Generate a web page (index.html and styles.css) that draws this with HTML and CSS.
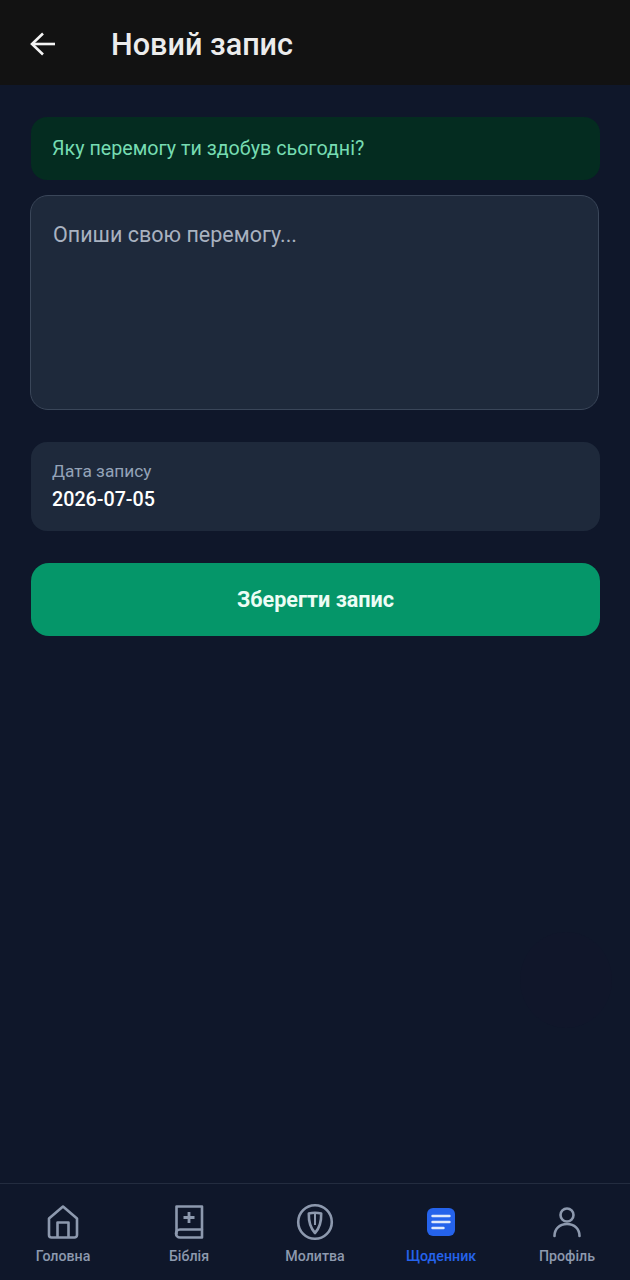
FILE: index.html
```html
<!DOCTYPE html>
<html lang="uk">
<head>
    <meta charset="UTF-8">
    <meta name="viewport" content="width=device-width, initial-scale=1.0">
    <title>Новий запис</title>
    <link rel="stylesheet" href="styles.css">
</head>
<body>

<div class="app">
    <header class="topbar">
        <button class="back-button" aria-label="Назад">
            <svg width="28" height="28" viewBox="0 0 28 28" fill="none" stroke="#f3f3f3" stroke-width="2.6">
                <path d="M3 14H26"/>
                <path d="M14 3.5L3 14L14 24.5"/>
            </svg>
        </button>
        <h1 class="topbar-title">Новий запис</h1>
    </header>

    <main class="content">
        <div class="prompt">Яку перемогу ти здобув сьогодні?</div>
        <textarea class="entry-input" placeholder="Опиши свою перемогу..."></textarea>
        <div class="date-field">
            <span class="date-label">Дата запису</span>
            <span class="date-value">2026-07-05</span>
        </div>
        <button class="save-button">Зберегти запис</button>
        <div class="ghost-button"></div>
    </main>

    <nav class="tabbar">
        <a class="tab">
            <svg class="tab-icon" width="34" height="38" viewBox="0 0 34 38" fill="none" stroke="#8d99ae" stroke-width="2.6" stroke-linejoin="round">
                <path d="M17 3.5L3 15.5V32a2.5 2.5 0 0 0 2.5 2.5h23A2.5 2.5 0 0 0 31 32V15.5L17 3.5Z"/>
                <path d="M11.5 34.5V19.5h11v15"/>
            </svg>
            <span>Головна</span>
        </a>
        <a class="tab">
            <svg class="tab-icon" width="34" height="38" viewBox="0 0 34 38" fill="none" stroke="#8d99ae" stroke-width="2.6" stroke-linejoin="round">
                <path d="M30 26.5V3.5H4.5v28"/>
                <path d="M30 26.5H8a4 4 0 0 0 0 8H30Z"/>
                <path d="M17 9v11M11.5 14.5h11" stroke-width="2.8"/>
            </svg>
            <span>Біблія</span>
        </a>
        <a class="tab">
            <svg class="tab-icon" width="38" height="38" viewBox="0 0 38 38" fill="none" stroke="#8d99ae" stroke-width="2.6" stroke-linejoin="round">
                <circle cx="19" cy="19" r="16.8"/>
                <path d="M12.8 10.5c4-1 8.4-1 12.4 0 .2 7.5-2 15-6.2 19.5-4.2-4.5-6.4-12-6.2-19.5Z"/>
                <path d="M19 11v11" stroke-width="2"/>
            </svg>
            <span>Молитва</span>
        </a>
        <a class="tab tab-active">
            <svg class="tab-icon" width="28" height="38" viewBox="0 0 28 38">
                <rect y="5" width="28" height="28" rx="6" fill="#2563eb"/>
                <path d="M5.5 13h17M5.5 19h17M5.5 25h11" stroke="#dfe9fb" stroke-width="2.4" stroke-linecap="round"/>
            </svg>
            <span>Щоденник</span>
        </a>
        <a class="tab">
            <svg class="tab-icon" width="30" height="38" viewBox="0 0 30 38" fill="none" stroke="#8d99ae" stroke-width="2.6" stroke-linecap="round">
                <circle cx="15" cy="12" r="6.5"/>
                <path d="M2.5 33c0-7 5-12 12.5-12s12.5 5 12.5 12"/>
            </svg>
            <span>Профіль</span>
        </a>
    </nav>
</div>

</body>
</html>
```

FILE: styles.css
```css
* {
    box-sizing: border-box;
}

html, body {
    height: 100%;
}

body {
    margin: 0;
    font-family: 'Roboto', sans-serif;
    background-color: #0f172a;
}

.app {
    display: flex;
    flex-direction: column;
    height: 1280px;
}

.topbar {
    display: flex;
    align-items: center;
    gap: 54px;
    height: 85px;
    padding: 2px 0 0 29px;
    background-color: #121212;
}

.back-button {
    display: flex;
    padding: 0;
    border: none;
    background: none;
}

.topbar-title {
    margin: 2px 0 0;
    font-size: 30.6px;
    font-weight: 500;
    color: #ececec;
}

.content {
    position: relative;
    flex: 1;
    display: flex;
    flex-direction: column;
    padding: 32px 30px 0 31px;
}

.prompt {
    height: 63px;
    padding: 20px 21px 0;
    border-radius: 16px;
    font-size: 19.7px;
    color: #76dcb2;
    background-color: #042c20;
}

.entry-input {
    display: block;
    height: 215px;
    margin: 15px 1px 32px -1px;
    padding: 26px 22px;
    border: 1.5px solid #3a4659;
    border-radius: 18px;
    outline: none;
    resize: none;
    font-family: inherit;
    font-size: 21.5px;
    background-color: #1e293b;
}

.entry-input::placeholder {
    color: #a9b2c0;
    opacity: 1;
}

.date-field {
    display: flex;
    flex-direction: column;
    height: 89px;
    padding: 19px 21px 0;
    border-radius: 16px;
    background-color: #1e293b;
}

.date-label {
    font-size: 17.3px;
    line-height: 20px;
    color: #94a3b8;
}

.date-value {
    margin-top: 6px;
    font-size: 19.7px;
    line-height: 26px;
    font-weight: 500;
    color: #fff;
}

.save-button {
    height: 73px;
    margin-top: 32px;
    padding-bottom: 2px;
    border: none;
    border-radius: 18px;
    font-family: inherit;
    font-size: 21.6px;
    font-weight: 700;
    color: #ecfdf5;
    background-color: #059669;
}

/* faint round action button sitting behind the page */
.ghost-button {
    position: absolute;
    top: 847px;
    right: 18px;
    width: 92px;
    height: 96px;
    border-radius: 50%;
    background-color: #10162a;
}

.tabbar {
    display: flex;
    height: 97px;
    padding-top: 19px;
    border-top: 1px solid #232c3f;
}

.tab {
    flex: 1;
    display: flex;
    flex-direction: column;
    align-items: center;
    font-size: 14.2px;
    font-weight: 500;
    color: #8d99ae;
}

.tab-icon {
    height: 38px;
    margin-bottom: 7px;
}

.tab-active {
    color: #2563eb;
}
```
